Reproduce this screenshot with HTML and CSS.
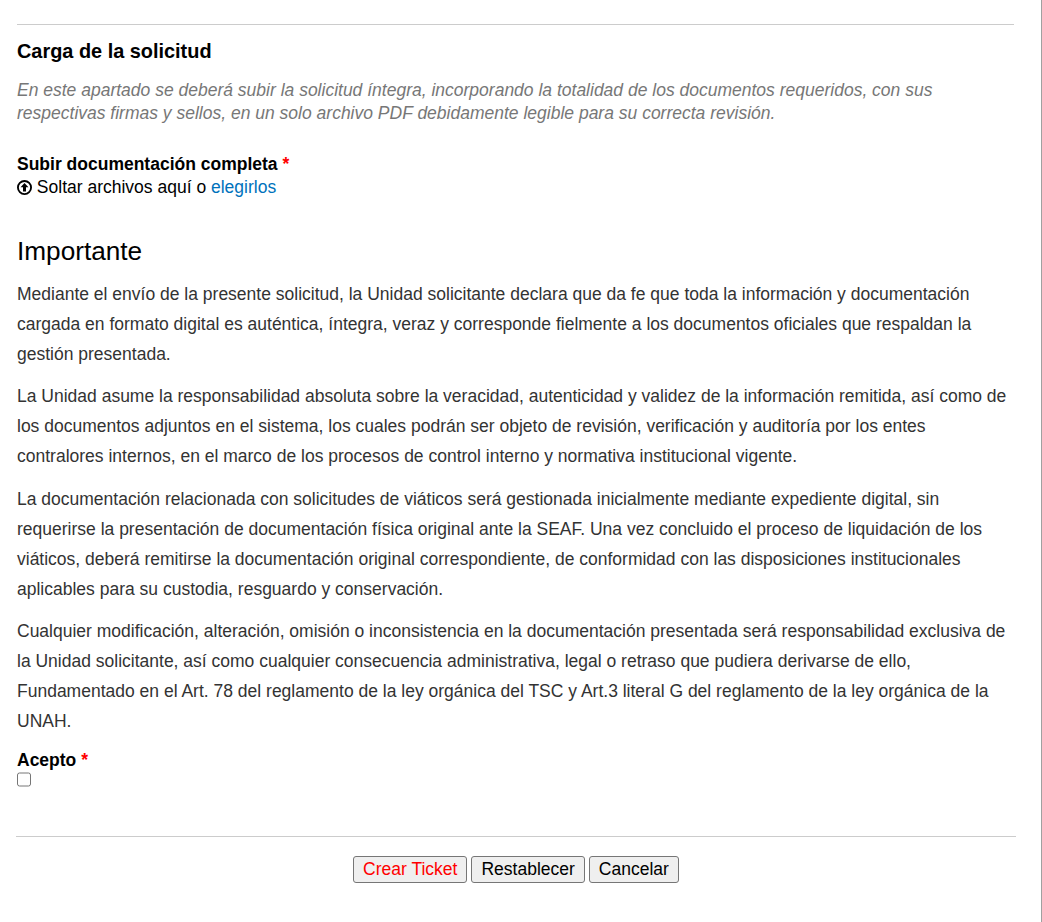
FILE: index.html
```html
<html>
    <head>
        <title>Crear Ticket</title>
        <link rel="stylesheet" href="styles.css">
    </head>
    <body>
        <form class="ticket-form">
            <div class="form-body">
                <hr class="rule">
                <h2 class="section-title">Carga de la solicitud</h2>
                <p class="section-note">En este apartado se deberá subir la solicitud íntegra, incorporando la totalidad de los documentos requeridos, con sus respectivas firmas y sellos, en un solo archivo PDF debidamente legible para su correcta revisión.</p>

                <div class="field upload-field">
                    <label class="field-label">Subir documentación completa <span class="required">*</span></label>
                    <div class="dropzone">
                        <svg class="upload-icon" viewBox="0 0 16 16" width="15" height="15">
                            <circle cx="8" cy="8" r="7" fill="none" stroke="#000" stroke-width="2"/>
                            <path d="M8 3.2 L12.2 7.8 L9.6 7.8 L9.6 12.2 L6.4 12.2 L6.4 7.8 L3.8 7.8 Z" fill="#000"/>
                        </svg>
                        Soltar archivos aquí o <a href="#" class="browse-link">elegirlos</a>
                    </div>
                </div>

                <h3 class="notice-title">Importante</h3>
                <p class="notice">Mediante el envío de la presente solicitud, la Unidad solicitante declara que da fe que toda la información y documentación cargada en formato digital es auténtica, íntegra, veraz y corresponde fielmente a los documentos oficiales que respaldan la gestión presentada.</p>
                <p class="notice">La Unidad asume la responsabilidad absoluta sobre la veracidad, autenticidad y validez de la información remitida, así como de los documentos adjuntos en el sistema, los cuales podrán ser objeto de revisión, verificación y auditoría por los entes contralores internos, en el marco de los procesos de control interno y normativa institucional vigente.</p>
                <p class="notice">La documentación relacionada con solicitudes de viáticos será gestionada inicialmente mediante expediente digital, sin requerirse la presentación de documentación física original ante la SEAF. Una vez concluido el proceso de liquidación de los viáticos, deberá remitirse la documentación original correspondiente, de conformidad con las disposiciones institucionales aplicables para su custodia, resguardo y conservación.</p>
                <p class="notice">Cualquier modificación, alteración, omisión o inconsistencia en la documentación presentada será responsabilidad exclusiva de la Unidad solicitante, así como cualquier consecuencia administrativa, legal o retraso que pudiera derivarse de ello, Fundamentado en el Art. 78 del reglamento de la ley orgánica del TSC y Art.3 literal G del reglamento de la ley orgánica de la UNAH.</p>

                <div class="field accept-field">
                    <label class="field-label">Acepto <span class="required">*</span></label>
                    <div><input type="checkbox" class="accept-box"></div>
                </div>
            </div>

            <hr class="rule rule-wide">
            <div class="actions">
                <button type="submit" class="btn btn-primary">Crear Ticket</button>
                <button type="reset" class="btn">Restablecer</button>
                <button type="button" class="btn">Cancelar</button>
            </div>
        </form>
    </body>
</html>
```

FILE: styles.css
```css
html {
    background: #fff;
}

body {
    margin: 0;
    height: 922px;
    overflow: hidden;
    border-right: 1px solid #a0a0a0;
    box-sizing: border-box;
    font-family: "Liberation Sans", Arial, sans-serif;
    font-size: 17.5px;
    color: #000;
}

.ticket-form {
    padding: 24px 25px 0 16px;
}

.form-body {
    padding: 0 2px 0 1px;
}

.rule {
    border: 0;
    border-top: 1px solid #ccc;
    margin: 0;
}

.section-title {
    font-size: 19.9px;
    font-weight: bold;
    line-height: 22px;
    margin: 15px 0 0;
}

.section-note {
    font-style: italic;
    color: #777;
    line-height: 23px;
    margin: 17px 0 0;
}

.field-label {
    display: block;
    font-weight: bold;
    line-height: 23px;
}

.required {
    color: #f00;
}

.upload-field {
    margin-top: 28px;
}

.dropzone {
    line-height: 23px;
}

.upload-icon {
    vertical-align: -2px;
}

.browse-link {
    color: #0072bc;
    text-decoration: none;
}

.notice-title {
    font-size: 26.2px;
    font-weight: normal;
    line-height: 30px;
    margin: 37px 0 13px;
}

.notice {
    color: #333;
    line-height: 30.1px;
    margin: 0 0 12px;
}

.accept-field {
    margin-top: 13px;
}

.accept-box {
    margin: 0;
    display: block;
    width: 14px;
    height: 15px;
}

.rule-wide {
    margin-top: 49px;
}

.actions {
    display: flex;
    justify-content: center;
    gap: 4px;
    margin-top: 19px;
}

.btn {
    font-family: inherit;
    font-size: 17.5px;
    height: 27px;
    padding: 0 9px;
    background: #efefef;
    border: 1px solid #767676;
    border-radius: 3px;
    color: #000;
}

.btn-primary {
    color: #f00;
}
```
